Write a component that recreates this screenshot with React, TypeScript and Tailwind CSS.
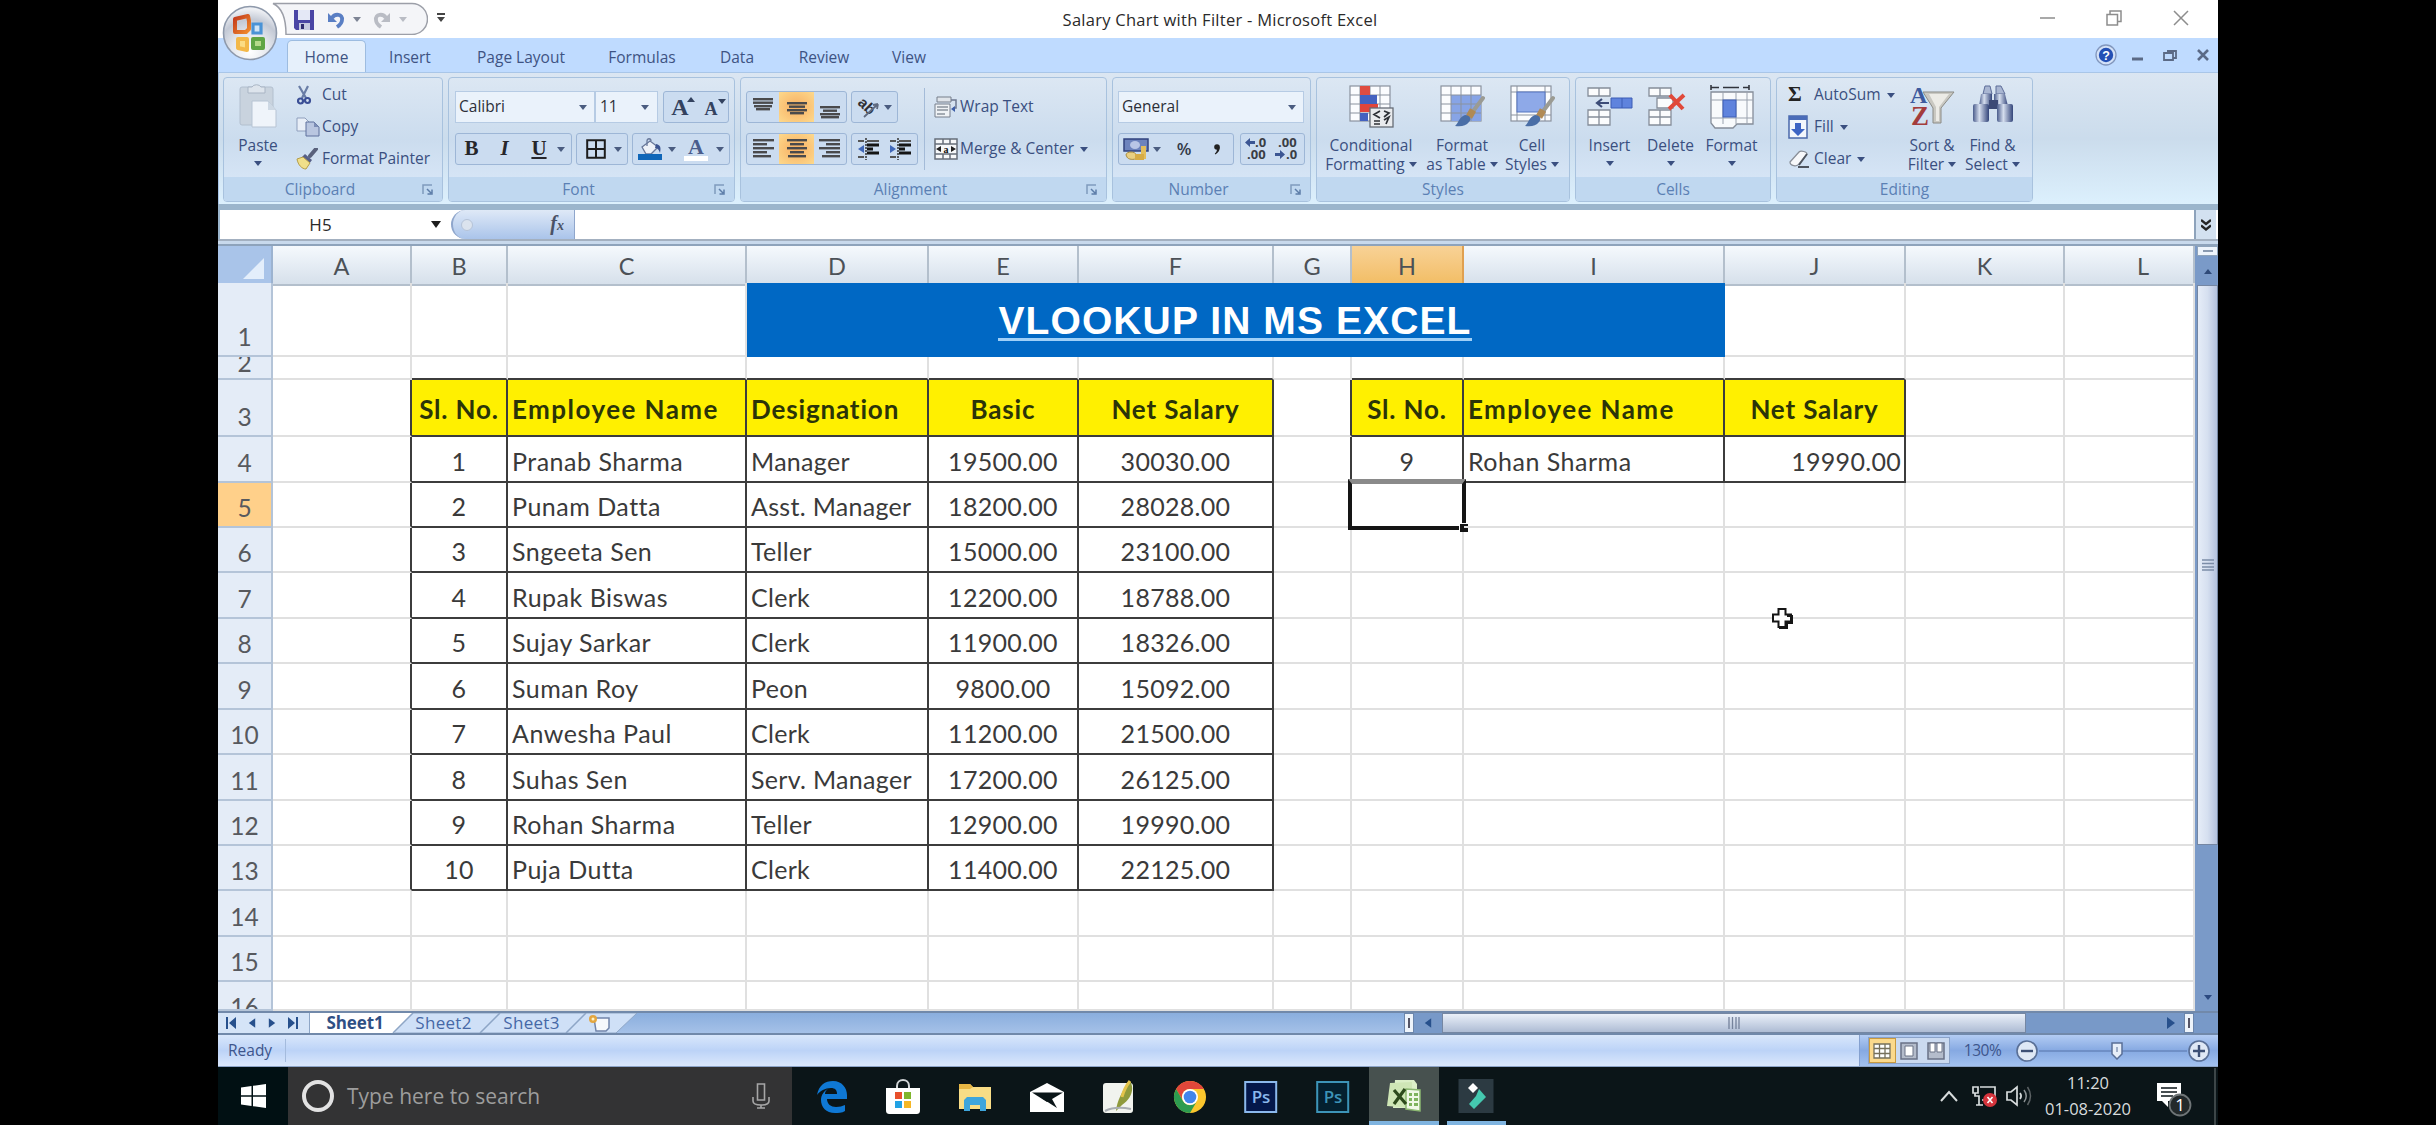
import React from "react";

type Kids = { children?: React.ReactNode; className?: string };

const Caret = ({ className = "" }: { className?: string }) => (
  <svg viewBox="0 0 8 5" className={`h-[5px] w-2 shrink-0 ${className}`}>
    <path d="M0 0h8L4 5z" fill="currentColor" />
  </svg>
);

/* ---------- ribbon icons ---------- */

const OfficeOrb = () => (
  <svg viewBox="0 0 56 56" className="h-14 w-14">
    <defs>
      <radialGradient id="orb" cx="50%" cy="85%" r="80%">
        <stop offset="0" stopColor="#ffffff" />
        <stop offset="0.45" stopColor="#e3e6ec" />
        <stop offset="0.75" stopColor="#c3c9d5" />
        <stop offset="1" stopColor="#eef0f4" />
      </radialGradient>
      <linearGradient id="orbR" x1="0" y1="0" x2="1" y2="1">
        <stop offset="0" stopColor="#c33a1c" />
        <stop offset="1" stopColor="#f08a2c" />
      </linearGradient>
    </defs>
    <circle cx="28" cy="28" r="26.5" fill="url(#orb)" stroke="#8e99ab" strokeWidth="1.6" />
    <path d="M13 14l13-3 1 5v8l-3 3H13z" fill="none" stroke="url(#orbR)" strokeWidth="4" strokeLinejoin="round" />
    <path d="M31 19h8v9h-8z" fill="#cfe4f6" stroke="#4a93d6" strokeWidth="3.2" />
    <path d="M16 34h9v11l-9-2z" fill="#fbdc85" stroke="#f3b848" strokeWidth="4" strokeLinejoin="round" />
    <path d="M31 34h10v9H31z" fill="#b5d98a" stroke="#5fa544" strokeWidth="4" strokeLinejoin="round" />
  </svg>
);

const Save = () => (
  <svg viewBox="0 0 22 22" className="h-[22px] w-[22px]">
    <path d="M1 1h20v20H3l-2-2z" fill="#4b46a5" />
    <path d="M5 1h12v10H5z" fill="#e4e8f6" />
    <path d="M6 14h11v7H6z" fill="#c6c9e0" />
    <path d="M8 15h3v5H8z" fill="#2f2b70" />
  </svg>
);

const Undo = ({ color }: { color: string }) => (
  <svg viewBox="0 0 18 18" className="h-[18px] w-[18px]">
    <path d="M1 2v9h9z" fill={color} />
    <path d="M5 7c3-5 11-4 10 2 0 3-2 5-5 7" fill="none" stroke={color} strokeWidth="3.800" />
  </svg>
);

const PasteIcon = () => (
  <svg viewBox="0 0 38 44" className="h-11 w-[38px]">
    <rect x="1" y="3" width="33" height="38" rx="2" fill="#c9d3de" stroke="#b2bfce" />
    <path d="M9 3h4a5 4 0 0 1 9 0h4v6H9z" fill="#dde4ec" stroke="#a9b5c4" />
    <path d="M13 17h16l8 9v17H13z" fill="#eff4fa" stroke="#b7c4d4" />
    <path d="M29 17v9h8z" fill="#cdd8e4" />
  </svg>
);

const CutIcon = () => (
  <svg viewBox="0 0 16 20" className="h-5 w-4">
    <path d="M3 1l7 12M12 1L6 13" stroke="#6a7da6" strokeWidth="2.2" />
    <circle cx="4.5" cy="16" r="2.5" fill="none" stroke="#3b4f96" strokeWidth="2.2" />
    <circle cx="11.5" cy="15.5" r="2.5" fill="none" stroke="#3b4f96" strokeWidth="2.2" />
  </svg>
);

const CopyIcon = () => (
  <svg viewBox="0 0 24 20" className="h-5 w-6">
    <path d="M1 1h8l4 4v9H1z" fill="#e8eef7" stroke="#8f9fbd" />
    <path d="M10 5h8l5 5v9H10z" fill="#b9c6e0" stroke="#5e719d" />
    <path d="M18 5v5h5z" fill="#7c8db5" />
  </svg>
);

const BrushIcon = () => (
  <svg viewBox="0 0 22 22" className="h-[22px] w-[22px]">
    <path d="M20 1l-6 7" stroke="#59617c" strokeWidth="4" strokeLinecap="round" />
    <path d="M9 6l7 6-3 4-8-6z" fill="#565f88" />
    <path d="M1 11l6-2 7 6-4 6c-4 0-8-4-9-10z" fill="#f0df8a" stroke="#b49c48" />
  </svg>
);

const Launcher = () => (
  <svg viewBox="0 0 11 11" className="h-[11px] w-[11px]">
    <path d="M1 10V1h9" fill="none" stroke="#7f9bbd" strokeWidth="1.5" />
    <path d="M5 5l4 4M10 5.5V10H5.5" fill="none" stroke="#5d7da8" strokeWidth="1.5" />
  </svg>
);

const BordersIcon = () => (
  <svg viewBox="0 0 20 20" className="h-5 w-5">
    <path d="M1.200 1.200h17.600v17.600H1.200zM10 1v18M1 10h18" fill="none" stroke="#1c1c1c" strokeWidth="2" />
  </svg>
);

const BucketIcon = () => (
  <svg viewBox="0 0 25 22" className="h-[22px] w-[25px]">
    <path d="M4 9l8-6 8 6-7 7H8z" fill="#eef2f8" stroke="#68789a" strokeWidth="1.300" />
    <path d="M9 8V3c0-3 4-3 4 0" fill="none" stroke="#68789a" strokeWidth="1.300" />
    <path d="M18 6c5 1 5 4 4 9-1-3-2-5-5-5z" fill="#3d5591" />
    <rect x="0" y="16" width="24" height="6" fill="#0f66b8" />
  </svg>
);

const Lines = ({ rows }: { rows: [number, number, number][] }) => (
  <svg viewBox="0 0 22 24" className="h-6 w-[22px]">
    {rows.map(([x, y, w], i) => (
      <rect key={i} x={x} y={y} width={w} height="2.4" fill="#4a4a4c" />
    ))}
  </svg>
);

const Orientation = () => (
  <svg viewBox="0 0 24 24" className="h-6 w-6 overflow-visible">
    <text x="0" y="13" transform="rotate(45 6 12)" fontSize="15" fontWeight="bold" fontFamily="Liberation Sans, sans-serif" fill="#2e2e34">ab</text>
    <path d="M8 22L22 9M22 9l-5 1M22 9l-1 5" fill="none" stroke="#5f6a80" strokeWidth="1.800" />
  </svg>
);

const Indent = ({ right }: { right?: boolean }) => (
  <svg viewBox="0 0 24 24" className="h-6 w-6">
    <path d="M2 4h6M11 4h12M2 20h6" stroke="#555" strokeWidth="2" />
    <path d="M11 8h12M11 12h6M11 16h12" stroke="#151515" strokeWidth="3" />
    <path d="M10 1v22" stroke="#333" strokeWidth="1.500" strokeDasharray="2 1" />
    <path d={right ? "M2 8l6 4-6 4z" : "M8 8l-6 4 6 4z"} fill="#4168b8" />
  </svg>
);

const WrapIcon = () => (
  <svg viewBox="0 0 24 22" className="h-[22px] w-6">
    <path d="M3 1h14v5H3z" fill="#dfe4ea" stroke="#777f8b" />
    <path d="M1 8h15v13H1z" fill="#eff2f5" stroke="#777f8b" />
    <path d="M3 11h11M3 14h11M3 18h8" stroke="#8b929c" strokeWidth="1.600" />
    <path d="M17 4h5v8h-3" fill="none" stroke="#6d7890" strokeWidth="1.500" />
    <path d="M21 10v6l-4-3z" fill="#3e5fa8" />
  </svg>
);

const MergeIcon = () => (
  <svg viewBox="0 0 24 22" className="h-[22px] w-6">
    <rect x="1" y="1" width="22" height="20" fill="#f6f8fa" stroke="#666e7a" strokeWidth="1.500" />
    <path d="M1 6h22M1 16h22M9 1v5M16 1v5M9 16v5M16 16v5" stroke="#666e7a" strokeWidth="1.500" />
    <path d="M2 11l5-3v6zM22 11l-5-3v6z" fill="#222" />
    <text x="12" y="14.500" textAnchor="middle" fontSize="10" fontWeight="bold" fontFamily="Liberation Serif, serif" fill="#111">a</text>
  </svg>
);

const MoneyIcon = () => (
  <svg viewBox="0 0 26 24" className="h-6 w-[26px]">
    <path d="M1 2h24v12H1z" fill="#6d83bd" stroke="#30427e" strokeWidth="1.500" />
    <ellipse cx="12" cy="8" rx="5" ry="4" fill="#b9c6e6" />
    <path d="M18 9h5v13h-5z" fill="#e2bd5c" />
    <path d="M3 18c0-4 10-4 10 0v3c0 2-8 2-9-1z" fill="#e9cf82" stroke="#a98a3c" />
    <path d="M12 17h9v6h-9z" fill="#d6ab46" />
  </svg>
);

const Decimals = ({ less }: { less?: boolean }) => (
  <svg viewBox="0 0 26 24" className="h-6 w-[26px] overflow-visible">
    <g fontFamily="Open Sans, sans-serif" fontWeight="bold" fontSize="13" fill="#3a3d44">
      <text x={less ? 3 : 11} y="10">{less ? ".00" : ".0"}</text>
      <text x={less ? 11 : 3} y="22">{less ? ".0" : ".00"}</text>
    </g>
    {less ? (
      <path d="M0 16h5V13l5 4.500-5 4.500v-3H0z" fill="#3c5693" />
    ) : (
      <path d="M11 4H6V1L1 5.500 6 10V7h5z" fill="#3c5693" />
    )}
  </svg>
);

const TableIcon = ({ kind }: { kind: "cond" | "table" | "cell" }) => (
  <svg viewBox="0 0 46 44" className="h-11 w-[46px]">
    <rect x="2" y="2" width="40" height="35" fill="#fbfcfe" stroke="#8a929e" strokeWidth="1.200" />
    {kind === "table" && <rect x="12" y="11" width="30" height="26" fill="#87a4e6" />}
    {kind === "cell" ? (
      <>
        <path d="M2 8h40M2 31h40M8 2v35M36 2v35" stroke="#8a929e" />
        <rect x="8" y="8" width="28" height="20" fill="#8ea9e8" stroke="#5575c0" />
      </>
    ) : (
      <path d="M12 2v35M22 2v35M32 2v35M2 11h40M2 20h40M2 29h40" stroke="#8a929e" />
    )}
    {kind === "cond" ? (
      <>
        <rect x="12" y="2" width="10" height="9" fill="#df4c40" />
        <rect x="12" y="11" width="17" height="9" fill="#4462c0" />
        <rect x="12" y="20" width="18" height="8" fill="#e0453c" />
        <rect x="12" y="29" width="8" height="8" fill="#4462c0" />
        <rect x="22" y="24" width="23" height="19" fill="#e9ebee" stroke="#666c76" strokeWidth="1.300" />
        <path d="M32 27l-6 3.500 6 3.500M26 37h6M26 40h6M36 27l5 2-5 4M36 36l5-3-3 7" fill="none" stroke="#2d3036" strokeWidth="1.700" />
      </>
    ) : (
      <>
        <path d="M44 14L32 30" stroke="#9b9b93" strokeWidth="4" strokeLinecap="round" />
        <path d="M34 26l-4 7" stroke="#b08a55" strokeWidth="7" />
        <path d="M16 42c3-2 4-9 10-11 5 0 7 4 4 7-3 4-8 5-14 4z" fill="#4a6ea6" />
      </>
    )}
  </svg>
);

const CellsIcon = ({ kind }: { kind: "insert" | "delete" | "format" }) =>
  kind === "format" ? (
    <svg viewBox="0 0 46 46" className="h-[46px] w-[46px]">
      <path d="M2 1v5M40 1v5M2 3.500h8M14 3.500h16M34 3.500h6" stroke="#30343c" strokeWidth="1.600" />
      <path d="M2 8h42v32H28l-4 4H6l-4-5z" fill="#f8fafc" stroke="#858d99" strokeWidth="1.300" />
      <path d="M2 16h42M2 34h42M14 8v32M27 8v32M38 8v32" stroke="#9aa2ae" />
      <rect x="14" y="16" width="13" height="17" fill="#5f83dd" stroke="#3c5db5" />
    </svg>
  ) : (
    <svg viewBox="0 0 46 46" className="h-[46px] w-[46px]">
      <g fill="#fbfcfd" stroke="#858d99" strokeWidth="1.300">
        <path d="M1 4h22v8H1zM1 26h22v15H1z" />
        <path d="M12 4v8M12 26v15M1 33h22" />
        {kind === "delete" && <path d="M9 14h16v10H9z" />}
      </g>
      {kind === "insert" ? (
        <>
          <path d="M24 14h21v10H24zM35 14v10" fill="#5f83dd" stroke="#3c5db5" />
          <path d="M22 19H11M15 15l-5 4 5 4" fill="none" stroke="#3d4d78" strokeWidth="2.200" />
        </>
      ) : (
        <path d="M22 11l13 14M36 11L21 25" stroke="#e0493a" strokeWidth="4" />
      )}
    </svg>
  );

const FillIcon = () => (
  <svg viewBox="0 0 20 24" className="h-6 w-5">
    <rect x="1" y="1" width="18" height="22" fill="#f2f6fc" stroke="#4a68aa" strokeWidth="1.500" />
    <rect x="1" y="1" width="18" height="4" fill="#4a6cb8" />
    <path d="M7 8h6v6h4l-7 7-7-7h4z" fill="#3c64c4" />
  </svg>
);

const EraserIcon = () => (
  <svg viewBox="0 0 22 18" className="h-[18px] w-[22px]">
    <path d="M2 12L11 2c2-2 8 0 8 2l-8 10c-2 3-9 2-9-2z" fill="#f7f8fa" stroke="#8a8f98" strokeWidth="1.300" />
    <path d="M19 4l-8 11M10 17h11" stroke="#4e545e" strokeWidth="1.800" />
  </svg>
);

const SortIcon = () => (
  <svg viewBox="0 0 46 44" className="h-11 w-[46px]">
    <path d="M14 8h31L32 24v15h-8V24z" fill="#c9c8c2" stroke="#8b8b86" />
    <path d="M20 10h20l-10 13v14h-3V23z" fill="#ecebe6" />
    <g fontFamily="Liberation Serif, serif" fontWeight="bold">
      <text x="1" y="19" fontSize="24" fill="#3d5a9e">A</text>
      <text x="2" y="41" fontSize="27" fill="#a33c3c">Z</text>
    </g>
  </svg>
);

const BinocularsIcon = () => (
  <svg viewBox="0 0 42 42" className="h-[42px] w-[42px]">
    <defs>
      <linearGradient id="bino" x1="0" x2="1">
        <stop offset="0" stopColor="#4a5c8c" />
        <stop offset="0.4" stopColor="#d5deee" />
        <stop offset="1" stopColor="#33457a" />
      </linearGradient>
    </defs>
    <path d="M13 2h5l2 8h-9zM24 2h5l4 8h-9z" fill="#a9b6d2" stroke="#5c6c98" />
    <path d="M9 10h11v12H7z" fill="url(#bino)" />
    <path d="M22 10h11l3 12H22z" fill="url(#bino)" />
    <path d="M17 16h9v9h-9z" fill="#3c4a76" />
    <rect x="1" y="20" width="16" height="18" rx="2" fill="url(#bino)" />
    <rect x="25" y="20" width="16" height="18" rx="2" fill="url(#bino)" />
  </svg>
);

/* ---------- ribbon building blocks ---------- */

const Group = ({ label, className = "", launcher, children }: Kids & { label: string; launcher?: boolean }) => (
  <section className={`flex h-[125px] shrink-0 flex-col overflow-hidden rounded-[4px] border border-[#a8c2de] bg-linear-to-b from-[#dce7f3] via-[#cbdcee] to-[#dceafa] ${className}`}>
    <div className="flex flex-1">{children}</div>
    <div className="flex h-6 items-center bg-[#c0d8f0]">
      <span className={`flex-1 pt-px text-center text-[15.5px] text-[#5b80b4] ${launcher ? "pr-1.5" : ""}`}>{label}</span>
      {launcher && <span className="mr-[9px]"><Launcher /></span>}
    </div>
  </section>
);

const Box = ({ className = "", children }: Kids) => (
  <div className={`flex h-8 shrink-0 items-center rounded-[3px] border border-[#9db6d6] bg-[#cbdcf0] text-[#4a5c80] ${className}`}>{children}</div>
);

const Field = ({ className = "", children }: Kids) => (
  <div className={`flex h-8 shrink-0 items-center justify-between border border-[#b6cbe4] bg-[#eaf2fb] text-[15.5px] text-[#2c2f38] ${className}`}>{children}</div>
);

const Slot = ({ className = "", children }: Kids) => (
  <span className={`flex h-full items-center justify-center ${className}`}>{children}</span>
);

const SmallButton = ({ icon, label, caret }: { icon: React.ReactNode; label: string; caret?: boolean }) => (
  <div className="flex h-8 items-center whitespace-nowrap">
    <span className="flex w-[26px] items-center">{icon}</span>
    <span>{label}</span>
    {caret && <Caret className="ml-1.5" />}
  </div>
);

const BigButton = ({ icon, lines, className = "" }: { icon: React.ReactNode; lines: string[]; className?: string }) => (
  <div className={`flex shrink-0 flex-col items-center pt-1.5 leading-[19px] whitespace-nowrap ${className}`}>
    <span className="flex h-[52px] items-start">{icon}</span>
    <span>{lines[0]}</span>
    {lines[1] ? (
      <span className="flex items-center gap-1">{lines[1]}<Caret /></span>
    ) : (
      <Caret className="mt-1.5" />
    )}
  </div>
);

const full = (ys: number[], widths: number[], align: "l" | "c" | "r"): [number, number, number][] =>
  ys.map((y, i) => [align === "l" ? 1 : align === "r" ? 21 - widths[i] : 11 - widths[i] / 2, y, widths[i]]);

const Ribbon = () => (
  <div className="flex h-[132px] border-t border-l border-[#a9c6e8] bg-linear-to-b from-[#dbe6f2] via-[#cbdcec] to-[#dcf0fd] pt-1 pl-1 text-[15.5px] text-[#3a4f80]">
    <Group label="Clipboard" launcher className="mr-[5px] w-[220px]">
      <BigButton className="ml-3 w-11" icon={<PasteIcon />} lines={["Paste"]} />
      <div className="ml-4 mt-px flex flex-col">
        <SmallButton icon={<CutIcon />} label="Cut" />
        <SmallButton icon={<CopyIcon />} label="Copy" />
        <SmallButton icon={<BrushIcon />} label="Format Painter" />
      </div>
    </Group>

    <Group label="Font" launcher className="mr-[5px] w-[287px]">
      <div className="flex flex-col gap-2.5 pt-[13px] pl-1.5">
        <div className="flex">
          <Field className="w-[140px] px-[3px]">Calibri<Caret className="mr-1 text-[#4a5c80]" /></Field>
          <Field className="mr-[5px] w-[63px] px-1">11<Caret className="mr-1 text-[#4a5c80]" /></Field>
          <Box className="w-[66px] font-['Liberation_Serif',serif] font-bold text-[#33425f]">
            <Slot className="w-8 pl-1.5 text-[24px] leading-none">A<Caret className="mb-4 -ml-0.5 h-1 w-1.5 rotate-180" /></Slot>
            <Slot className="w-8 pt-1 pl-1.5 text-[18px] leading-none">A<Caret className="mb-4 h-1 w-1.5" /></Slot>
          </Box>
        </div>
        <div className="flex">
          <Box className="mr-1 w-[117px] font-['Liberation_Serif',serif] text-[21px] font-bold text-[#26262b]">
            <Slot className="w-[31px]">B</Slot>
            <Slot className="w-[35px] italic">I</Slot>
            <Slot className="w-[34px] underline underline-offset-2">U</Slot>
            <Caret className="ml-px text-[#4a5c80]" />
          </Box>
          <Box className="mr-1 w-[52px]"><Slot className="w-[37px]"><BordersIcon /></Slot><Caret /></Box>
          <Box className="w-[98px]">
            <Slot className="w-[35px]"><BucketIcon /></Slot><Caret />
            <Slot className="w-10 flex-col font-['Liberation_Serif',serif] text-[22px] leading-[19px] font-bold text-[#4a5d8c]">A<span className="h-[5px] w-6 bg-white" /></Slot><Caret />
          </Box>
        </div>
      </div>
    </Group>

    <Group label="Alignment" launcher className="mr-[5px] w-[367px]">
      <div className="flex w-[183px] flex-col gap-2.5 pt-[13px] pl-[5px]">
        <div className="flex">
          <Box className="mr-1 w-[101px]">
            <Slot className="w-[33px]"><Lines rows={full([3, 6.5, 10, 13], [20, 20, 18, 14], "c")} /></Slot>
            <Slot className="w-[35px] bg-[radial-gradient(#f7ae62,#fdd98c)]"><Lines rows={full([7, 10.5, 14, 17], [20, 16, 20, 14], "c")} /></Slot>
            <Slot className="w-[33px]"><Lines rows={full([11, 14.5, 18, 21], [20, 14, 20, 18], "c")} /></Slot>
          </Box>
          <Box className="w-[47px]"><Slot className="w-8"><Orientation /></Slot><Caret /></Box>
        </div>
        <div className="flex">
          <Box className="mr-1 w-[101px]">
            <Slot className="w-[33px]"><Lines rows={full([2, 6, 10, 14, 18], [21, 14, 21, 14, 18], "l")} /></Slot>
            <Slot className="w-[35px] bg-[radial-gradient(#f7ae62,#fdd98c)]"><Lines rows={full([2, 6, 10, 14, 18], [20, 14, 20, 14, 18], "c")} /></Slot>
            <Slot className="w-[33px]"><Lines rows={full([2, 6, 10, 14, 18], [21, 14, 21, 14, 18], "r")} /></Slot>
          </Box>
          <Box className="w-[67px]"><Slot className="w-8"><Indent /></Slot><Slot className="w-8"><Indent right /></Slot></Box>
        </div>
      </div>
      <div className="mt-2.5 h-[82px] w-px bg-[#a4bbd8]" />
      <div className="ml-[9px] mt-[13px] flex flex-col gap-2.5">
        <SmallButton icon={<WrapIcon />} label="Wrap Text" />
        <SmallButton icon={<MergeIcon />} label="Merge & Center" caret />
      </div>
    </Group>

    <Group label="Number" launcher className="mr-[5px] w-[199px]">
      <div className="flex flex-col gap-2.5 pt-[13px] pl-[5px]">
        <Field className="w-[186px] px-[3px]">General<Caret className="mr-1 text-[#4a5c80]" /></Field>
        <div className="flex">
          <Box className="mr-1.5 w-[116px]">
            <Slot className="w-[34px]"><MoneyIcon /></Slot><Caret />
            <Slot className="w-[46px] text-[17px] font-semibold text-[#333a48]">%</Slot>
            <Slot className="w-5">
              <svg viewBox="0 0 6 11" className="h-[11px] w-1.5"><circle cx="3" cy="3" r="2.800" fill="#222" /><path d="M5.800 3c0 4-2 6-4.500 7.500l-.5-1C2 8.500 3 7 3 5z" fill="#222" /></svg>
            </Slot>
          </Box>
          <Box className="w-[65px]"><Slot className="w-8"><Decimals /></Slot><Slot className="w-8"><Decimals less /></Slot></Box>
        </div>
      </div>
    </Group>

    <Group label="Styles" className="mr-[5px] w-[254px]">
      <BigButton className="w-[108px]" icon={<TableIcon kind="cond" />} lines={["Conditional", "Formatting"]} />
      <BigButton className="w-[74px]" icon={<TableIcon kind="table" />} lines={["Format", "as Table"]} />
      <BigButton className="w-[66px]" icon={<TableIcon kind="cell" />} lines={["Cell", "Styles"]} />
    </Group>

    <Group label="Cells" className="mr-[5px] w-[196px]">
      <BigButton className="ml-[3px] w-[61px]" icon={<CellsIcon kind="insert" />} lines={["Insert"]} />
      <BigButton className="w-[61px]" icon={<CellsIcon kind="delete" />} lines={["Delete"]} />
      <BigButton className="w-[61px]" icon={<CellsIcon kind="format" />} lines={["Format"]} />
    </Group>

    <Group label="Editing" className="w-[257px]">
      <div className="ml-[11px] mt-px flex w-[111px] flex-col">
        <SmallButton icon={<span className="font-['Liberation_Serif',serif] text-[21px] font-bold text-[#222]">Σ</span>} label="AutoSum" caret />
        <SmallButton icon={<FillIcon />} label="Fill" caret />
        <SmallButton icon={<EraserIcon />} label="Clear" caret />
      </div>
      <BigButton className="ml-[3px] w-[60px]" icon={<SortIcon />} lines={["Sort &", "Filter"]} />
      <BigButton className="w-[61px]" icon={<BinocularsIcon />} lines={["Find &", "Select"]} />
    </Group>
  </div>
);

/* ---------- window chrome ---------- */

const TitleBar = () => (
  <div className="relative flex h-[38px] items-start bg-white">
    <div className="relative ml-[54px] h-[35px] w-[156px]">
      <svg viewBox="0 0 156 35" className="absolute inset-0 h-full w-full">
        <path d="M1 3.500h139a15 15 0 0 1 0 31H14C14 22 11 8 1 3.500z" fill="#f4f5f8" stroke="#9c9fa8" strokeWidth="1.500" />
      </svg>
      <div className="relative flex h-full items-center pt-1 pl-[21px] text-[#7d8494]">
        <Save />
        <span className="ml-3"><Undo color="#5a7fc4" /></span>
        <Caret className="ml-2" />
        <span className="ml-3 -scale-x-100"><Undo color="#b9bcc4" /></span>
        <Caret className="ml-2 text-[#b9bcc4]" />
      </div>
    </div>
    <svg viewBox="0 0 8 9" className="mt-[13px] ml-[9px] h-[9px] w-2">
      <path d="M0 0h8v2H0zM0 4h8L4 9z" fill="#444" />
    </svg>
    <div className="absolute inset-x-0 top-[9px] pl-1 text-center text-[16.5px] leading-[22px] tracking-[0.27px] text-[#2a2a2a]">
      Salary Chart with Filter - Microsoft Excel
    </div>
    <div className="absolute top-2.5 right-[29px] flex items-center gap-[51px] text-[#8d8d8d]">
      <svg viewBox="0 0 15 16" className="h-4 w-[15px]"><path d="M0 8h15" stroke="currentColor" strokeWidth="1.500" /></svg>
      <svg viewBox="0 0 16 16" className="h-4 w-4"><path d="M1 4.500h10.500V15H1zM4 4V1h11v10.500h-3" fill="none" stroke="currentColor" strokeWidth="1.500" /></svg>
      <svg viewBox="0 0 16 16" className="h-4 w-4"><path d="M1 1l14 14M15 1L1 15" stroke="currentColor" strokeWidth="1.500" /></svg>
    </div>
  </div>
);

const tabs: [string, string][] = [
  ["Insert", "w-[88px]"],
  ["Page Layout", "w-[134px]"],
  ["Formulas", "w-[108px]"],
  ["Data", "w-[82px]"],
  ["Review", "w-[92px]"],
  ["View", "w-[78px]"],
];

const TabStrip = () => (
  <div className="relative flex h-[34px] items-end bg-[#bfdbff] pl-[69px] text-[15.5px] text-[#3e5383]">
    <div className="flex h-8 w-[79px] items-center justify-center rounded-t-[5px] border border-b-0 border-[#9dbce0] bg-[#e6f0fb] pt-0.5">Home</div>
    {tabs.map(([t, w]) => (
      <div key={t} className={`flex h-8 items-center justify-center pt-[3px] ${w}`}>{t}</div>
    ))}
    <div className="ml-auto flex h-[34px] items-center gap-4 pr-[9px] text-[#5b6a86]">
      <svg viewBox="0 0 22 22" className="mr-[-1px] h-[22px] w-[22px]">
        <circle cx="11" cy="11" r="10" fill="#d3e1f7" stroke="#8297bd" strokeWidth="1.300" />
        <circle cx="11" cy="11" r="7.200" fill="#2450b5" />
        <text x="11" y="15.500" textAnchor="middle" fontSize="12.500" fontWeight="bold" fontFamily="Liberation Sans, sans-serif" fill="#fff">?</text>
      </svg>
      <svg viewBox="0 0 11 12" className="h-3 w-[11px]"><path d="M0 10h11" stroke="currentColor" strokeWidth="3" /></svg>
      <svg viewBox="0 0 14 12" className="ml-1 h-3 w-3.5"><path d="M1 4h9v7H1zM4 2h9v7h-3" fill="none" stroke="currentColor" strokeWidth="1.800" /></svg>
      <svg viewBox="0 0 12 12" className="ml-1 h-3 w-3"><path d="M1 1l10 10M11 1L1 11" stroke="currentColor" strokeWidth="2.600" /></svg>
    </div>
    <div className="absolute -top-[33px] left-1"><OfficeOrb /></div>
  </div>
);

const FormulaBar = () => (
  <div className="flex h-9 flex-col border-b-2 border-[#8ea3bb] bg-[#c8d9ec]">
    <div className="flex h-[31px] border-b-2 border-[#a3b0c0] bg-white text-[17px] text-[#2a2a2a]">
      <div className="flex w-[233px] items-center border-l-2 border-[#9bb5cc]">
        <span className="w-[201px] pt-px text-center">H5</span>
        <svg viewBox="0 0 10 7" className="ml-2.5 h-[7px] w-2.5"><path d="M0 0h10L5 7z" fill="#1d1d1d" /></svg>
      </div>
      <div className="flex w-[124px] items-center justify-between rounded-l-[16px] border-r border-l-2 border-[#8fa6cc] bg-linear-to-b from-[#dfe9f7] to-[#aac4ea] pr-2.5 pl-2">
        <span className="h-3 w-3 rounded-full border border-[#b5c3d8] bg-[#dbe3ee]" />
        <span className="font-['Liberation_Serif',serif] text-[20px] leading-5 font-bold text-[#4a5266] italic">f<span className="text-[14px]">x</span></span>
      </div>
      <div className="flex-1" />
      <div className="mr-0.5 flex w-[22px] items-center justify-center border-l-2 border-[#8ea3bb] bg-[#d3e1f0]">
        <svg viewBox="0 0 10 12" className="h-3 w-2.5"><path d="M0 1l5 4 5-4M0 6.500l5 4 5-4" fill="none" stroke="#262626" strokeWidth="2.400" /></svg>
      </div>
    </div>
  </div>
);

/* ---------- sheet ---------- */

const columns = ["A", "B", "C", "D", "E", "F", "G", "H", "I", "J", "K", "L"];
const colGrid = "grid grid-cols-[55px_139px_96px_239px_182px_150px_195px_78px_112px_261px_181px_159px_130px]";

const rowHeights = [
  "h-[74px]", "h-[23px]", "h-[57px]", "h-[46px]", "h-[45px]", "h-[45px]", "h-[46px]", "h-[45px]",
  "h-[46px]", "h-[45px]", "h-[46px]", "h-[45px]", "h-[45px]", "h-[46px]", "h-[45px]", "h-[29px]",
];

const employees = [
  ["1", "Pranab Sharma", "Manager", "19500.00", "30030.00"],
  ["2", "Punam Datta", "Asst. Manager", "18200.00", "28028.00"],
  ["3", "Sngeeta Sen", "Teller", "15000.00", "23100.00"],
  ["4", "Rupak Biswas", "Clerk", "12200.00", "18788.00"],
  ["5", "Sujay Sarkar", "Clerk", "11900.00", "18326.00"],
  ["6", "Suman Roy", "Peon", "9800.00", "15092.00"],
  ["7", "Anwesha Paul", "Clerk", "11200.00", "21500.00"],
  ["8", "Suhas Sen", "Serv. Manager", "17200.00", "26125.00"],
  ["9", "Rohan Sharma", "Teller", "12900.00", "19990.00"],
  ["10", "Puja Dutta", "Clerk", "11400.00", "22125.00"],
];

const cellText = (row: number, col: string): string => {
  const main = "BCDEF".indexOf(col);
  const look = "HIJ".indexOf(col);
  if (row === 3) {
    if (main >= 0) return ["Sl. No.", "Employee Name", "Designation", "Basic", "Net Salary"][main];
    if (look >= 0) return ["Sl. No.", "Employee Name", "Net Salary"][look];
  }
  if (row >= 4 && row <= 13 && main >= 0) return employees[row - 4][main];
  if (row === 4 && look >= 0) return ["9", "Rohan Sharma", "19990.00"][look];
  return "";
};

const Cell = ({ row, col }: { row: number; col: string }) => {
  const main = "BCDEF".includes(col);
  const look = "HIJ".includes(col);
  const inMain = main && row >= 3 && row <= 13;
  const inLook = look && row >= 3 && row <= 4;
  const darkRight = inMain || inLook || (col === "A" && row >= 3 && row <= 13) || (col === "G" && (row === 3 || row === 4));
  const darkBottom = inMain || inLook || (row === 2 && (main || look));
  const head = row === 3 && (main || look);
  const left = col === "C" || col === "D" || col === "I";
  const right = col === "J" && row === 4;
  const selected = row === 5 && col === "H";
  const name = col === "C" || col === "I";
  return (
    <div
      className={[
        "relative flex items-center border-r-2 border-b-2 whitespace-nowrap",
        darkRight ? "border-r-[#3c3c3c]" : "border-r-[#e0e0e0]",
        darkBottom ? "border-b-[#3c3c3c]" : "border-b-[#e0e0e0]",
        head ? "bg-[#fff000] text-[26px] font-bold text-[#2b3408]" : "text-[25px] text-[#3a3a3a]",
        head ? (name ? "tracking-[1.45px]" : "tracking-[0.85px]") : name ? "tracking-[0.5px]" : "tracking-[0.3px]",
        left ? "justify-start pl-1" : right ? "justify-end pr-[3px]" : "justify-center",
        row === 3 ? "pt-1" : "pt-[5px]",
      ].join(" ")}
    >
      {cellText(row, col)}
      {selected && (
        <div className="absolute -top-1 -right-[4px] -bottom-[4px] -left-1 border-4 border-t-[5px] border-[#151515] border-t-[#8a8a8a]">
          <span className="absolute -right-[6px] -bottom-[6px] h-[9px] w-[9px] border-t border-l border-white bg-[#151515]" />
        </div>
      )}
    </div>
  );
};

const Row = ({ row }: { row: number }) => (
  <div className={`${colGrid} ${rowHeights[row - 1]} ${row === 5 ? "relative z-10" : "overflow-clip"}`}>
    <div
      className={`flex justify-center overflow-hidden border-r-2 border-b-2 border-[#b4c4d8] text-[24.5px] text-[#57595e] ${
        row === 5 ? "bg-[#ffd08a]" : "bg-[#e4ecf7]"
      } ${row === 16 ? "items-start pt-[11px]" : row === 2 ? "items-end pb-0.5" : "items-end pb-1"} ${row === 2 ? "leading-[26px]" : "leading-[28px]"}`}
    >
      {row}
    </div>
    {row === 1 ? (
      <>
        {["A", "B", "C"].map((c) => <Cell key={c} row={1} col={c} />)}
        <div className="col-span-6 flex items-center justify-center bg-[#0068c4] pt-1 pr-0.5">
          <span className="border-b-[3px] border-[#9fd0f8] font-['Liberation_Sans',Arial,sans-serif] text-[39px] leading-[34px] font-bold tracking-[1.1px] whitespace-nowrap text-white">
            VLOOKUP IN MS EXCEL
          </span>
        </div>
        {["J", "K", "L"].map((c) => <Cell key={c} row={1} col={c} />)}
      </>
    ) : (
      columns.map((c) => <Cell key={c} row={row} col={c} />)
    )}
  </div>
);

const Sheet = () => (
  <div className="flex h-[765px]">
    <div className="relative w-[1977px] overflow-hidden bg-white font-[Lato,'Liberation_Sans',sans-serif]">
      <div className={`${colGrid} h-[37px] text-[23.5px] text-[#4c5157]`}>
        <div className="flex items-end justify-end border-r-2 border-[#9cb3d0] bg-[#a9c4e9] p-[7px]">
          <svg viewBox="0 0 21 21" className="h-[21px] w-[21px]"><path d="M21 0v21H0z" fill="#e3eefb" /></svg>
        </div>
        {columns.map((c) => (
          <div
            key={c}
            className={`flex items-center justify-center border-r-2 border-b-2 pt-[3px] ${
              c === "H" ? "border-[#e0a050] bg-linear-to-b from-[#f8d296] to-[#f2bd64]" : "border-[#b3bfcc] bg-linear-to-b from-[#f5f9fd] to-[#d6e0eb]"
            } ${c === "L" ? "pl-7" : ""}`}
          >
            {c}
          </div>
        ))}
      </div>
      {rowHeights.map((_, i) => <Row key={i} row={i + 1} />)}
      <svg viewBox="0 0 24 24" className="absolute top-[360px] left-[1552px] z-10 h-6 w-6">
        <path d="M8.500 3h7v5.500H21v7h-5.500V21h-7v-5.500H3v-7h5.500z" fill="#fff" stroke="#151515" strokeWidth="2" />
        <path d="M17 10h5v7h-5v5h-8" fill="none" stroke="#151515" strokeWidth="2" />
      </svg>
    </div>
    <div className="flex w-[23px] flex-col items-stretch bg-[#7a9ac8] pl-0.5">
      <div className="mb-px flex h-2.5 items-center justify-center border border-[#8ea3bb] bg-[#eef4fb]"><span className="h-0.5 w-2.5 bg-[#8a9ab0]" /></div>
      <div className="flex h-7 items-center justify-center"><Caret className="h-1.5 w-3 rotate-180 text-[#2f4a78]" /></div>
      <div className="flex h-[560px] items-center justify-center border border-[#7587a3] bg-linear-to-r from-[#e6edf8] via-[#d6e0f0] to-[#b4c2de]">
        <svg viewBox="0 0 12 12" className="h-3 w-3"><path d="M0 1h12M0 4.500h12M0 8h12M0 11h12" stroke="#7c8da8" strokeWidth="1.500" /></svg>
      </div>
      <div className="mt-auto flex h-4 items-start justify-center"><Caret className="h-2 w-3 text-[#2c4a80]" /></div>
    </div>
  </div>
);

/* ---------- bottom bars ---------- */

const Tri = ({ d, className = "w-2" }: { d: string; className?: string }) => (
  <svg viewBox="0 0 10 12" className={`h-3 ${className}`}><path d={d} fill="#27508c" /></svg>
);

const SheetTabs = () => (
  <div className="relative flex h-6 border-t-2 border-b-2 border-[#7189aa] bg-linear-to-b from-[#8aaede] to-[#a5c1e8]">
    <div className="flex w-[92px] items-center border-r border-[#8ea6c6] bg-[#d5e4f7] pl-2">
      <Tri d="M0 0h2v12H0zM10 0v12L3 6z" className="w-2.5" />
      <Tri d="M9 0v12L1 6z" className="ml-3 w-2" />
      <Tri d="M1 0v12l8-6z" className="ml-3 w-2" />
      <Tri d="M8 0h2v12H8zM0 0v12l7-6z" className="ml-3 w-2.5" />
    </div>
    <div className="relative flex w-[330px] text-[17px] leading-5 text-[#4668a6]">
      <svg viewBox="0 0 330 20" className="absolute inset-0 h-full w-full" preserveAspectRatio="none">
        <path d="M0 0h327L306 20H0z" fill="#cfe0f7" stroke="#8ea6c6" />
        <path d="M0 0h103L84 20H0z" fill="#fff" />
        <path d="M103 0L83 20M190 0L170 20M276 0l-20 20" stroke="#8ea6c6" strokeWidth="1.500" fill="none" />
      </svg>
      <span className="relative w-[90px] text-center font-bold tracking-[-0.1px] text-[#2f4f84]">Sheet1</span>
      <span className="relative w-[86px] pl-px text-center tracking-[0.3px]">Sheet2</span>
      <span className="relative w-[90px] pl-px text-center tracking-[0.3px]">Sheet3</span>
      <svg viewBox="0 0 24 18" className="relative mt-px ml-3 h-[18px] w-6">
        <path d="M6 4h15v10l-3 3H8z" fill="#f6f8fc" stroke="#7184aa" strokeWidth="1.500" />
        <circle cx="5" cy="5" r="4" fill="#e3a640" />
        <circle cx="5" cy="5" r="1.500" fill="#fff3c4" />
      </svg>
    </div>
    <div className="ml-auto flex w-[814px] items-center bg-[#7899c8]">
      <span className="flex h-full w-2.5 items-center justify-center border border-[#6c86ab] bg-[#eef4fb]"><span className="h-2.5 w-0.5 bg-[#556]" /></span>
      <Tri d="M9 0v12L1 6z" className="ml-2.5 w-2" />
      <div className="ml-2.5 flex h-full w-[584px] items-center justify-center border border-[#7587a3] bg-linear-to-b from-[#eaf0f9] to-[#aebcd4]">
        <svg viewBox="0 0 12 12" className="h-3 w-3"><path d="M1 0v12M4.500 0v12M8 0v12M11 0v12" stroke="#75839c" strokeWidth="1.300" /></svg>
      </div>
      <span className="ml-[140px]"><Tri d="M1 0v12l8-6z" className="w-2.5" /></span>
      <span className="ml-2 flex h-full w-2.5 items-center justify-center border border-[#6c86ab] bg-[#eef4fb]"><span className="h-2.5 w-0.5 bg-[#556]" /></span>
    </div>
  </div>
);

const ZoomKnob = ({ plus }: { plus?: boolean }) => (
  <svg viewBox="0 0 24 24" className="h-6 w-6 shrink-0">
    <circle cx="12" cy="12" r="10" fill="#dfe8f5" stroke="#596f96" strokeWidth="1.600" />
    <path d={plus ? "M6 12h12M12 6v12" : "M6 12h12"} stroke="#3c4f75" strokeWidth="2.400" />
  </svg>
);

const StatusBar = () => (
  <div className="flex h-8 items-stretch border-b border-[#8ca4c8] bg-linear-to-b from-[#d9e7fb] via-[#bcd3f7] to-[#dbe8fc] text-[15.5px] text-[#3d558c]">
    <div className="my-1 flex w-[68px] items-center border-r border-[#a4bbdd] pl-2.5">Ready</div>
    <div className="ml-auto flex w-[359px] items-center border-l border-[#84a0cf] bg-linear-to-b from-[#b3ccf3] via-[#86a9e2] to-[#a3c2f0] pl-2">
      <div className="flex h-[27px] w-[82px] border border-[#8aa2c8] bg-[#cbdaf0]">
        <span className="flex w-[27px] items-center justify-center border border-[#c89a40] bg-[#fbd98c]">
          <svg viewBox="0 0 18 16" className="h-4 w-[18px]"><path d="M1 1h16v14H1zM6.500 1v14M12 1v14M1 5.500h16M1 10.500h16" fill="#fff" stroke="#76705c" strokeWidth="1.300" /></svg>
        </span>
        <span className="flex w-[27px] items-center justify-center">
          <svg viewBox="0 0 18 18" className="h-[18px] w-[18px]"><path d="M1 1h16v16H1z" fill="#b4bccb" stroke="#6a7286" strokeWidth="1.500" /><path d="M5 4h8v10H5z" fill="#fff" stroke="#6a7286" /></svg>
        </span>
        <span className="flex w-[27px] items-center justify-center">
          <svg viewBox="0 0 18 18" className="h-[18px] w-[18px]"><path d="M1 1h16v16H1z" fill="#b4bccb" stroke="#6a7286" strokeWidth="1.500" /><path d="M3 1h5v9H3zM10 1h5v9h-5z" fill="#fff" stroke="#6a7286" /></svg>
        </span>
      </div>
      <span className="w-[65px] text-center text-[15.5px] tracking-[-0.5px]">130%</span>
      <ZoomKnob />
      <div className="flex h-[18px] flex-1 items-center justify-center bg-[linear-gradient(#6f8fc6,#6f8fc6)] bg-[length:100%_2px] bg-center bg-no-repeat pl-2">
        <svg viewBox="0 0 12 18" className="h-[18px] w-3"><path d="M1 1h10v11l-5 5-5-5z" fill="#e7eef8" stroke="#596f96" strokeWidth="1.500" /><path d="M6 5v5" stroke="#596f96" /></svg>
      </div>
      <span className="mr-[7px]"><ZoomKnob plus /></span>
    </div>
  </div>
);

const Ps = ({ color, bg }: { color: string; bg: string }) => (
  <svg viewBox="0 0 34 34" className="h-[34px] w-[34px]">
    <rect x="1.200" y="2" width="31" height="30" fill={bg} stroke={color} strokeWidth="2" />
    <text x="17" y="23" textAnchor="middle" fontSize="17" fontWeight="600" fontFamily="Open Sans, sans-serif" fill={color}>Ps</text>
  </svg>
);

const EdgeIcon = () => (
  <svg viewBox="0 0 32 34" className="h-[34px] w-8">
    <path d="M1 15C3 5 9 1 17 1c9 0 14 7 14 14v4H11c0 5 4 8 9 8 4 0 6-1 9-2v6c-3 2-7 2-10 2C10 33 5 27 5 20c0-5 3-9 7-11-2 1-3 3-3 5h12c0-4-2-6-6-6-6 0-11 3-14 7z" fill="#0f78d4" />
  </svg>
);

const StoreIcon = () => (
  <svg viewBox="0 0 36 36" className="h-9 w-9">
    <path d="M12 10V7c0-8 12-8 12 0v3" fill="none" stroke="#d0d4d6" strokeWidth="2" />
    <path d="M1 9h34v22c0 3-1 4-4 4H5c-3 0-4-1-4-4z" fill="#fff" />
    <path d="M10 13h7v7h-7z" fill="#e8502c" /><path d="M19 13h7v7h-7z" fill="#7fb52c" />
    <path d="M10 22h7v7h-7z" fill="#22a2e4" /><path d="M19 22h7v7h-7z" fill="#f5b726" />
  </svg>
);

const FolderIcon = () => (
  <svg viewBox="0 0 34 30" className="h-[30px] w-[34px]">
    <path d="M1 2h11l3 3h18v22H1z" fill="#f9dd86" />
    <path d="M1 2h11l3 3-3 2H1z" fill="#e7b644" />
    <path d="M6 29V18l3-3h16l3 3v11h-6v-6H12v6z" fill="#3ea5dc" />
  </svg>
);

const MailIcon = () => (
  <svg viewBox="0 0 36 30" className="h-[30px] w-9">
    <path d="M1 10L18 1l17 9v20H1z" fill="#fff" />
    <path d="M3 10.500h31L18 20z" fill="#0a1518" />
    <path d="M14 17l14 9-5-9z" fill="#0a1518" />
  </svg>
);

const NoteIcon = () => (
  <svg viewBox="0 0 32 34" className="h-[34px] w-8">
    <rect x="1" y="3" width="30" height="30" rx="3" fill="#f1f3ee" />
    <path d="M28 1c5 8 1 18-8 24l-6 6c1-10 6-20 14-30z" fill="#8f9a3c" />
    <path d="M28 1c-4 5-7 12-8 16" fill="none" stroke="#e3c34a" strokeWidth="3" />
    <path d="M3 31c8-4 16-4 26-2" fill="none" stroke="#a8adb2" strokeWidth="2" />
  </svg>
);

const ChromeIcon = () => (
  <svg viewBox="0 0 34 34" className="h-[34px] w-[34px]">
    <circle cx="17" cy="17" r="16" fill="#fbc62d" />
    <path d="M3.140 9A16 16 0 0 1 30.860 9H17a8 8 0 0 0-7 12z" fill="#e2473a" />
    <path d="M3.140 9A16 16 0 0 0 17 33l7-12a8 8 0 0 1-14 0z" fill="#2d9c50" />
    <circle cx="17" cy="17" r="8" fill="#fff" />
    <circle cx="17" cy="17" r="6.300" fill="#4285ec" />
  </svg>
);

const ExcelIcon = () => (
  <svg viewBox="0 0 36 34" className="h-[34px] w-9">
    <path d="M9 1h19l3 4v24H7z" fill="#dcefc8" />
    <path d="M4 4l22-1v26L1 27z" fill="#cfe6b6" />
    <path d="M20 10l14 1v21l-14-2z" fill="#f0f8e6" stroke="#8cb872" strokeWidth="1.500" />
    <path d="M23 14h3v3h-3zM28 14h4v3h-4zM23 19h3v3h-3zM28 19h4v3h-4zM23 24h3v3h-3zM28 24h4v3h-4z" fill="#7eb35c" />
    <path d="M8 11l12 14M19 10L8 25" stroke="#2d4a1c" strokeWidth="3.200" />
  </svg>
);

const FilmoraIcon = () => (
  <svg viewBox="0 0 36 36" className="h-9 w-9">
    <rect x="0.500" y="1" width="35" height="34" fill="#2c3a42" />
    <path d="M15 5l5 5-5 5-5-5z" fill="#fff" />
    <path d="M21 11l7 8-12 12-5-5 7-8z" fill="#45c9b0" />
  </svg>
);

const pinned = [
  <EdgeIcon />, <StoreIcon />, <FolderIcon />, <MailIcon />, <NoteIcon />, <ChromeIcon />,
  <Ps color="#8bb8ec" bg="#04174a" />, <Ps color="#3d94b8" bg="#04202f" />,
];

const Taskbar = () => (
  <div className="flex h-[58px] items-stretch bg-[#0b1518] text-[#d8dcdd]">
    <div className="flex w-[70px] items-center justify-center bg-[#011013]">
      <svg viewBox="0 0 25 24" className="h-6 w-[25px]"><path d="M0 3.500L10.500 2v9.300H0zM12 1.800L25 0v11.300H12zM0 12.700h10.500V22L0 20.500zM12 12.700h13V24l-13-1.800z" fill="#fff" /></svg>
    </div>
    <div className="flex w-[504px] items-center bg-[#333334]">
      <span className="ml-[14px] h-8 w-8 rounded-full border-4 border-[#e2e2e2]" />
      <span className="ml-[13px] pt-px text-[21px] text-[#9d9d9d]">Type here to search</span>
      <svg viewBox="0 0 18 26" className="mr-[22px] ml-auto h-[26px] w-[18px]">
        <path d="M5.500 1h7v16h-7zM1 14v4c0 3 3 4 8 4s8-1 8-4v-4M9 22v3M5 25h8" fill="none" stroke="#a6a6a6" strokeWidth="1.600" />
      </svg>
    </div>
    <div className="ml-1 flex">
      {pinned.map((icon, i) => (
        <div key={i} className="flex w-[71.600px] items-center justify-center pt-0.5">{icon}</div>
      ))}
      <div className="flex w-[70px] items-center justify-center border-b-4 border-[#7fb4e0] bg-[#47514f] pt-1"><ExcelIcon /></div>
      <div className="ml-2 flex w-[59px] items-center justify-center border-b-4 border-[#7fb4e0] pt-1"><FilmoraIcon /></div>
    </div>
    <div className="ml-auto flex items-center">
      <svg viewBox="0 0 18 12" className="mr-3.5 h-3 w-[18px]"><path d="M1 11l8-9 8 9" fill="none" stroke="currentColor" strokeWidth="2" /></svg>
      <svg viewBox="0 0 26 24" className="mr-2 h-6 w-[26px]">
        <path d="M8 3h15v13H10M1 3h5v6H1zM3 9v3h4v9M4 21h7" fill="none" stroke="currentColor" strokeWidth="1.700" />
        <circle cx="18" cy="16" r="7" fill="#d5343c" /><path d="M15.500 13l5 6M20.500 13l-5 6" stroke="#fff" strokeWidth="1.600" />
      </svg>
      <svg viewBox="0 0 26 24" className="h-6 w-[26px]">
        <path d="M1 8h4l6-5v18l-6-5H1z" fill="none" stroke="currentColor" strokeWidth="1.700" />
        <path d="M14 9c1.500 2 1.500 4 0 6" fill="none" stroke="currentColor" strokeWidth="1.700" />
        <path d="M18 6c3 4 3 8 0 12" fill="none" stroke="#8c9294" strokeWidth="1.500" /><path d="M21.500 3c4 6 4 12 0 18" fill="none" stroke="#5c6264" strokeWidth="1.500" />
      </svg>
      <div className="ml-3 flex w-[88px] flex-col text-center text-[16.500px] leading-[26px]"><span>11:20</span><span>01-08-2020</span></div>
      <div className="relative mr-1.5 ml-6 h-[34px] w-[52px]">
        <svg viewBox="0 0 40 38" className="h-[38px] w-10">
          <path d="M1 4h24v18H12v6l-6-6H1z" fill="#fff" /><path d="M5 9h16M5 13h16M5 17h12" stroke="#0b1518" strokeWidth="1.600" />
          <circle cx="24" cy="26" r="10.500" fill="#23292b" stroke="#6f7577" strokeWidth="1.800" />
          <text x="24" y="32" textAnchor="middle" fontSize="17" fontFamily="Open Sans, sans-serif" fill="#fff">1</text>
        </svg>
      </div>
      <span className="h-[57px] w-1 border-l-2 border-[#3d4648]" />
    </div>
  </div>
);

export default function App() {
  return (
    <div className="flex h-[1125px] w-[2436px] justify-center overflow-hidden bg-black font-['Open_Sans','Noto_Sans',sans-serif]">
      <main className="flex w-[2000px] flex-col">
        <TitleBar />
        <TabStrip />
        <Ribbon />
        <div className="h-1.5 bg-[#9bb5cc]" />
        <FormulaBar />
        <Sheet />
        <SheetTabs />
        <StatusBar />
        <Taskbar />
      </main>
    </div>
  );
}
